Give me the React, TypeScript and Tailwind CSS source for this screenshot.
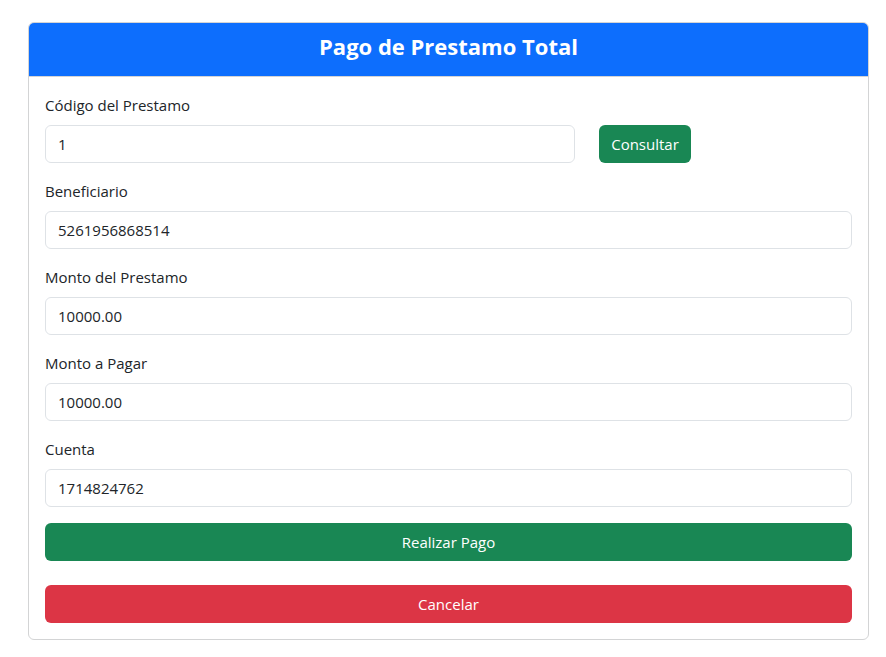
import React from 'react';

const fields = [
  { label: 'Beneficiario', value: '5261956868514' },
  { label: 'Monto del Prestamo', value: '10000.00' },
  { label: 'Monto a Pagar', value: '10000.00' },
  { label: 'Cuenta', value: '1714824762' },
];

const inputClass =
  'block h-[38px] px-3 rounded-[6px] border border-[#dee2e6] bg-white text-[15px] text-[#212529] outline-none';

export default function App() {
  return (
    <div className="min-h-screen bg-white pt-[22px] px-[28px] font-['Open_Sans',sans-serif] text-[#212529]">
      <div className="w-[841px] border border-[#d3d4d5] rounded-[6px] overflow-hidden">
        {/* Cabecera */}
        <div className="h-[54px] pb-[8px] bg-[#0d6efd] border-b border-[#d3d4d5] flex items-center justify-center">
          <h3 className="text-white text-[22px] font-bold leading-none">Pago de Prestamo Total</h3>
        </div>

        <div className="p-4">
          <div className="mb-4">
            <label className="block mb-2 leading-6 text-[15px]">Código del Prestamo</label>
            <div className="flex items-center gap-6">
              <input className={inputClass + ' w-[530px]'} defaultValue="1" />
              <button className="h-[38px] w-[92px] rounded-[6px] bg-[#198754] text-white text-[15px]">
                Consultar
              </button>
            </div>
          </div>

          {fields.map((f) => (
            <div key={f.label} className="mb-4">
              <label className="block mb-2 leading-6 text-[15px]">{f.label}</label>
              <input className={inputClass + ' w-full'} defaultValue={f.value} />
            </div>
          ))}

          <button className="w-full h-[38px] rounded-[6px] bg-[#198754] text-white text-[15px] mb-6">
            Realizar Pago
          </button>
          <button className="w-full h-[38px] rounded-[6px] bg-[#dc3545] text-white text-[15px]">
            Cancelar
          </button>
        </div>
      </div>
    </div>
  );
}
